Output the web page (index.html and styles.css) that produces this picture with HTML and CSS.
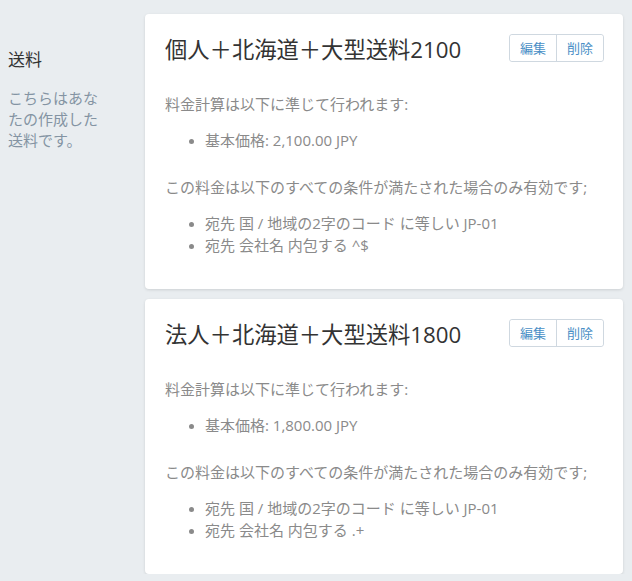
FILE: index.html
```html
<!DOCTYPE html>
<html lang="ja">
<head>
    <meta charset="UTF-8">
    <meta name="viewport" content="width=device-width, initial-scale=1.0">
    <title>送料</title>
    <link rel="stylesheet" href="styles.css">
</head>
<body>
    <div class="layout">
        <aside class="sidebar">
            <h2>送料</h2>
            <p>こちらはあなたの作成した送料です。</p>
        </aside>
        <main class="rates">
            <section class="card">
                <div class="card-header">
                    <h3>個人＋北海道＋大型送料2100</h3>
                    <div class="btn-group">
                        <button type="button">編集</button>
                        <button type="button">削除</button>
                    </div>
                </div>
                <p class="calc">料金計算は以下に準じて行われます:</p>
                <ul>
                    <li>基本価格: 2,100.00 JPY</li>
                </ul>
                <p class="cond">この料金は以下のすべての条件が満たされた場合のみ有効です;</p>
                <ul>
                    <li>宛先 国 / 地域の2字のコード に等しい JP-01</li>
                    <li>宛先 会社名 内包する ^$</li>
                </ul>
            </section>
            <section class="card">
                <div class="card-header">
                    <h3>法人＋北海道＋大型送料1800</h3>
                    <div class="btn-group">
                        <button type="button">編集</button>
                        <button type="button">削除</button>
                    </div>
                </div>
                <p class="calc">料金計算は以下に準じて行われます:</p>
                <ul>
                    <li>基本価格: 1,800.00 JPY</li>
                </ul>
                <p class="cond">この料金は以下のすべての条件が満たされた場合のみ有効です;</p>
                <ul>
                    <li>宛先 国 / 地域の2字のコード に等しい JP-01</li>
                    <li>宛先 会社名 内包する .+</li>
                </ul>
            </section>
        </main>
    </div>
</body>
</html>
```

FILE: styles.css
```css
body {
    font-family: "Open Sans", "Noto Sans CJK JP", sans-serif;
    margin: 0;
    padding: 14px 9px 0 8px;
    background-color: #e9edf0;
    color: #333;
}
.layout {
    display: flex;
}
.sidebar {
    width: 137px;
    flex-shrink: 0;
    padding-top: 34px;
}
.sidebar h2 {
    margin: 0 0 16px;
    font-size: 17px;
    font-weight: normal;
    line-height: 24px;
    color: #333;
}
.sidebar p {
    margin: 0;
    width: 100px;
    font-size: 15px;
    line-height: 21px;
    color: #8494a3;
}
.rates {
    flex: 1;
    display: flex;
    flex-direction: column;
    gap: 10px;
}
.card {
    background: #fff;
    border-radius: 4px;
    box-shadow: 0 1px 3px rgba(0,0,0,0.12);
    padding: 20px 19px 33px 20px;
    font-size: 15px;
    line-height: 22px;
    color: #8a8a8a;
}
.card-header {
    display: flex;
    justify-content: space-between;
    align-items: flex-start;
}
.card-header h3 {
    margin: 0;
    font-size: 22.3px;
    font-weight: normal;
    line-height: 32px;
    color: #333;
}
.btn-group {
    display: flex;
    border: 1px solid #cfd8e0;
    border-radius: 3px;
}
.btn-group button {
    font-family: inherit;
    font-size: 13px;
    line-height: 26px;
    height: 26px;
    padding: 0 10px;
    background: #fff;
    color: #4a8fc6;
    border: none;
    border-radius: 3px;
    cursor: pointer;
}
.btn-group button + button {
    border-left: 1px solid #cfd8e0;
    border-radius: 0 3px 3px 0;
}
.calc {
    margin: 27px 0 14px;
}
.cond {
    margin: 25px 0 14px;
}
ul {
    margin: 0;
    padding-left: 40px;
}
li::marker {
    font-size: 13px;
}
```
